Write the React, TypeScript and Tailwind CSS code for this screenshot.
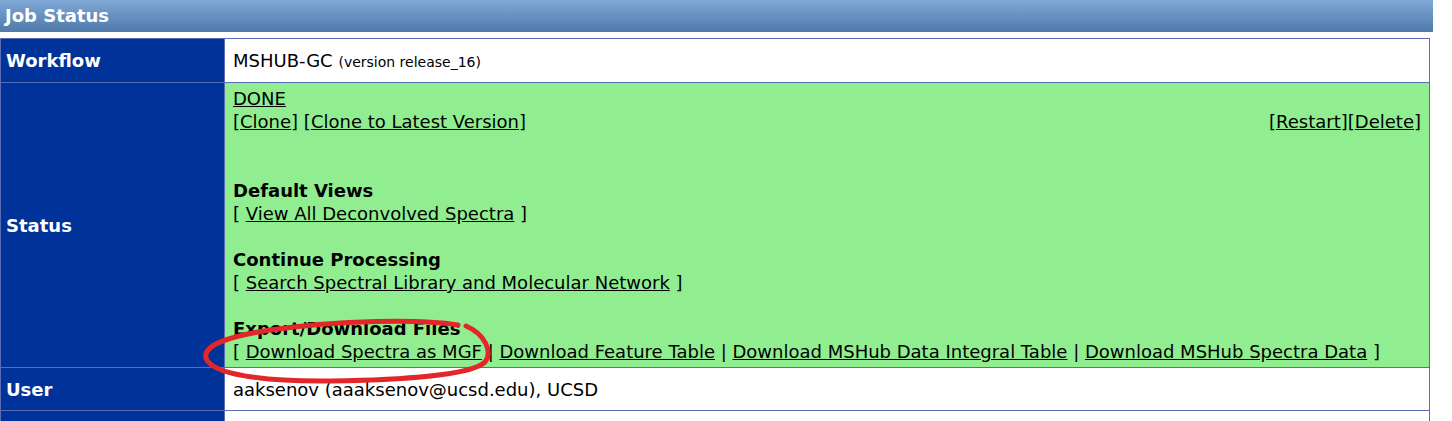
import React from "react";

const font = { fontFamily: '"DejaVu Sans", "Liberation Sans", sans-serif' };

function L({ children }: { children: React.ReactNode }) {
  return <a className="underline text-black">{children}</a>;
}

export default function App() {
  return (
    <div className="w-[1452px] h-[421px] bg-white overflow-hidden relative text-[18px] text-black" style={font}>
      <div className="h-8 w-[1433px] bg-gradient-to-b from-[#80a8d6] to-[#4f7aa9] text-white font-bold pl-[5px] leading-8">
        Job Status
      </div>
      <table className="mt-[6px] w-[1430px] border-collapse border border-[#5a6cb4]">
        <tbody>
          <tr className="h-[44px]">
            <td className="w-[224px] bg-[#003399] text-white font-bold pl-[5px] border border-[#5a6cb4]">Workflow</td>
            <td className="pl-2 border border-[#5a6cb4]">
              MSHUB-GC <span className="text-[14px]">(version release_16)</span>
            </td>
          </tr>
          <tr>
            <td className="bg-[#003399] text-white font-bold pl-[5px] border border-[#5a6cb4]">Status</td>
            <td className="bg-[#90ee90] px-2 py-1 leading-[23px] border border-[#5a6cb4]">
              <div><L>DONE</L></div>
              <div className="flex justify-between">
                <span>
                  [<L>Clone</L>] [<L>Clone to Latest Version</L>]
                </span>
                <span>
                  [<L>Restart</L>][<L>Delete</L>]
                </span>
              </div>
              <div className="h-[46px]" />
              <div className="font-bold">Default Views</div>
              <div>
                [ <L>View All Deconvolved Spectra</L> ]
              </div>
              <div className="h-[23px]" />
              <div className="font-bold">Continue Processing</div>
              <div>
                [ <L>Search Spectral Library and Molecular Network</L> ]
              </div>
              <div className="h-[23px]" />
              <div className="font-bold">Export/Download Files</div>
              <div>
                [ <L>Download Spectra as MGF</L> | <L>Download Feature Table</L> |{" "}
                <L>Download MSHub Data Integral Table</L> | <L>Download MSHub Spectra Data</L> ]
              </div>
            </td>
          </tr>
          <tr className="h-[43px]">
            <td className="bg-[#003399] text-white font-bold pl-[5px] border border-[#5a6cb4]">User</td>
            <td className="pl-2 border border-[#5a6cb4]">aaksenov (aaaksenov@ucsd.edu), UCSD</td>
          </tr>
          <tr className="h-[20px]">
            <td className="bg-[#003399] border border-[#5a6cb4]" />
            <td className="border border-[#5a6cb4]" />
          </tr>
        </tbody>
      </table>
      {/* red hand-drawn annotation */}
      <svg className="absolute left-0 top-0 pointer-events-none" width="1452" height="421">
        <path
          d="M458 325 C 420 319, 340 320, 270 330 C 225 337, 203 346, 206 358 C 211 374, 262 382, 332 381 C 402 380, 472 375, 485 362 C 493 352, 485 334, 466 326"
          fill="none"
          stroke="#e3262a"
          strokeWidth="5"
          strokeLinecap="round"
        />
      </svg>
    </div>
  );
}
